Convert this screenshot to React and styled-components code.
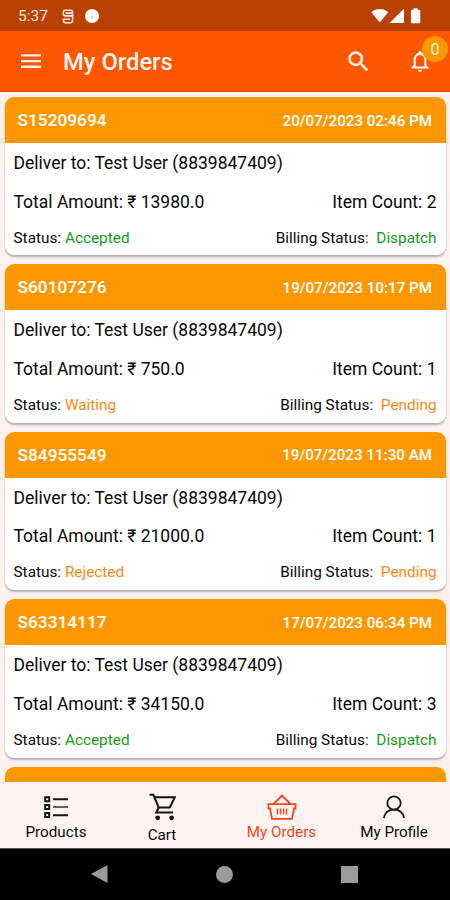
import React, { Component } from "react";
import styled, { createGlobalStyle } from "styled-components";

const orders = [
  { id: "S15209694", date: "20/07/2023 02:46 PM", amount: "13980.0", count: 2, status: "Accepted", billing: "Dispatch" },
  { id: "S60107276", date: "19/07/2023 10:17 PM", amount: "750.0", count: 1, status: "Waiting", billing: "Pending" },
  { id: "S84955549", date: "19/07/2023 11:30 AM", amount: "21000.0", count: 1, status: "Rejected", billing: "Pending" },
  { id: "S63314117", date: "17/07/2023 06:34 PM", amount: "34150.0", count: 3, status: "Accepted", billing: "Dispatch" },
];

const statusColors = {
  Accepted: "#169b20",
  Dispatch: "#169b20",
  Waiting: "#fb8714",
  Pending: "#fb8714",
  Rejected: "#fb8714",
};

const StatusBar = () => (
  <StatusWrapper>
    <Clock>5:37</Clock>
    <svg width="12" height="15" viewBox="0 0 12 15" fill="none" stroke="#ffe6dc" strokeWidth="1.6">
      <path d="M10.500 3.600V2.600Q10.500 1.200 8.500 1.200H3.500Q1.400 1.200 1.400 3.200V5Q1.400 6.900 3.500 6.900H10.600V11.500Q10.600 13.700 8.300 13.700H3.700Q1.400 13.700 1.400 11.500V10.300H8" />
      <path d="M3.500 4.100H10.500V7" />
    </svg>
    <InfoDot>
      <svg width="14" height="14" viewBox="0 0 14 14">
        <circle cx="7" cy="7" r="7" fill="#fff" />
        <path d="M7 4.200V5.300M7 6.400V9.800" stroke="#e5c3b4" strokeWidth="1.700" />
      </svg>
    </InfoDot>
    <Signals>
      <svg width="50" height="16" viewBox="0 0 50 16" fill="#fff">
        <path d="M0.300 4.200C5 0 12.500 0 17.200 4.200L8.700 14.500Z" />
        <path d="M33 0.800V15H18.500Z" />
        <path d="M42.500 0.300H46.500V1.800H48.300Q49.300 1.800 49.300 2.800V14Q49.300 15.300 48.300 15.300H41Q39.900 15.300 39.900 14V2.800Q39.900 1.800 41 1.800H42.500Z" />
      </svg>
    </Signals>
  </StatusWrapper>
);

const Navbar = () => (
  <NavWrapper>
    <svg width="20" height="16" viewBox="0 0 20 16" fill="#fff0e8">
      <path d="M0 1.200H20V3.500H0ZM0 6.900H20V9.200H0ZM0 12.600H20V14.900H0Z" />
    </svg>
    <Title>My Orders</Title>
    <SearchButton>
      <svg width="27" height="27" viewBox="0 0 24 24" fill="#fff4ee" stroke="#fff4ee" strokeWidth="0.3">
        <path d="M15.500 14h-.79l-.28-.27A6.471 6.471 0 0 0 16 9.500 6.500 6.500 0 1 0 9.500 16c1.610 0 3.090-.59 4.230-1.570l.27.28v.79l5 4.990L20.490 19l-4.990-5zm-6 0C7.010 14 5 11.990 5 9.500S7.010 5 9.500 5 14 7.010 14 9.500 11.990 14 9.500 14z" />
      </svg>
    </SearchButton>
    <BellButton>
      <svg width="26" height="26" viewBox="0 0 24 24" fill="#fff4ee">
        <path d="M12 22c1.100 0 2-.9 2-2h-4c0 1.100.9 2 2 2zm6-6v-5c0-3.070-1.630-5.640-4.500-6.320V4c0-.83-.67-1.500-1.500-1.500s-1.500.67-1.500 1.500v.68C7.640 5.360 6 7.920 6 11v5l-2 2v1h16v-1l-2-2zm-2 1H8v-6c0-2.480 1.510-4.500 4-4.500s4 2.020 4 4.500v6z" />
      </svg>
      <TotalItems>0</TotalItems>
    </BellButton>
  </NavWrapper>
);

const OrderCard = ({ order }) => (
  <Card>
    <CardHeader>
      <OrderId>{order.id}</OrderId>
      <OrderDate>{order.date}</OrderDate>
    </CardHeader>
    <Row $height={40}>
      <Info>Deliver to: Test User (8839847409)</Info>
    </Row>
    <Row $height={37}>
      <Info>Total Amount: ₹ {order.amount}</Info>
      <Info>Item Count: {order.count}</Info>
    </Row>
    <Row $height={35.4}>
      <Label>
        Status: <State $color={statusColors[order.status]}>{order.status}</State>
      </Label>
      <Label>
        Billing Status:&nbsp; <State $color={statusColors[order.billing]}>{order.billing}</State>
      </Label>
    </Row>
  </Card>
);

const ProductsIcon = () => (
  <svg width="26" height="26" viewBox="0 0 26 26" fill="none" stroke="#171313">
    <path d="M2.200 3.200H6.200V7.200H2.200ZM2.200 11H6.200V15H2.200ZM2.200 19H6.200V23H2.200Z" strokeWidth="2" />
    <path d="M10 5.200H25M10 21.200H25" strokeWidth="1.900" />
    <path d="M10 13H25" stroke="#5d5858" strokeWidth="1.900" />
  </svg>
);

const CartIcon = () => (
  <svg width="27" height="28" viewBox="0 0 28 28" fill="none" stroke="#171313" strokeWidth="2.100">
    <path d="M0.500 1.200H4.500L10 14.500H21.500L26.800 3.800H6" />
    <path d="M10 14.500L7.500 19.700H25" />
    <circle cx="9" cy="25.200" r="2.500" fill="#171313" stroke="none" />
    <circle cx="23.500" cy="25.200" r="2.500" fill="#171313" stroke="none" />
  </svg>
);

const BasketIcon = () => (
  <svg width="30" height="26" viewBox="0 0 30 26" fill="none" stroke="#f1461c" strokeWidth="1.800">
    <path d="M6.500 10L15 1.500L23.500 10" />
    <path d="M1.500 10.200H28.500V14.500H27L25 24.800H5L3 14.500H1.500Z" />
    <path d="M10.500 14.500V20.500M13.500 14.500V20.500M16.500 14.500V20.500M19.500 14.500V20.500" strokeWidth="1.500" />
  </svg>
);

const ProfileIcon = () => (
  <svg width="24" height="26" viewBox="0 0 24 26" fill="none" stroke="#171313" strokeWidth="1.800">
    <circle cx="12" cy="9" r="6.700" />
    <path d="M1.900 24C3 18.600 7 15.700 12 15.700S21 18.600 22.100 24" />
  </svg>
);

class App extends Component {
  render() {
    return (
      <Screen>
        <GlobalStyle />
        <StatusBar />
        <Navbar />
        <OrderList>
          {orders.map((order) => (
            <OrderCard key={order.id} order={order} />
          ))}
          <NextCard />
        </OrderList>
        <BottomTabs>
          <Tab $width={112}>
            <ProductsIcon />
            Products
          </Tab>
          <Tab $width={100} $low>
            <CartIcon />
            Cart
          </Tab>
          <Tab $width={139} $active>
            <BasketIcon />
            My Orders
          </Tab>
          <Tab $width={86}>
            <ProfileIcon />
            My Profile
          </Tab>
        </BottomTabs>
        <SystemBar>
          <svg width="17" height="18" viewBox="0 0 17 18">
            <path d="M16.500 0V18L0 9Z" fill="#9b9b9b" />
          </svg>
          <Home />
          <Recent />
        </SystemBar>
      </Screen>
    );
  }
}

export default App;

const GlobalStyle = createGlobalStyle`
  * {
    box-sizing: border-box;
  }
  body {
    margin: 0;
    font-family: Roboto, "Liberation Sans", sans-serif;
    overflow: hidden;
  }
  svg {
    display: block;
    flex: none;
  }
`;
const Screen = styled.div`
  display: flex;
  flex-direction: column;
  width: 450px;
  height: 900px;
  background: #fff1f0;
  color: #080808;
`;
const StatusWrapper = styled.div`
  flex: none;
  display: flex;
  align-items: center;
  height: 31px;
  padding: 1px 29px 0 18px;
  background: #ba4100;
`;
const Clock = styled.div`
  width: 44px;
  font-size: 15.5px;
  color: #ffe9e0;
`;
const InfoDot = styled.div`
  margin-left: 11px;
`;
const Signals = styled.div`
  margin-left: auto;
`;
const NavWrapper = styled.div`
  flex: none;
  display: flex;
  align-items: center;
  height: 61px;
  padding: 0 17px 0 21px;
  background: #ff5600;
  border-bottom: 1px solid #f5401c;
`;
const Title = styled.div`
  margin: 1px 0 0 22px;
  font-size: 23.8px;
  font-weight: 500;
  color: #fff4ee;
  white-space: nowrap;
`;
const SearchButton = styled.div`
  margin-left: auto;
`;
const BellButton = styled.div`
  position: relative;
  margin-left: 35px;
`;
const TotalItems = styled.div`
  position: absolute;
  left: 15px;
  top: -12px;
  width: 26px;
  height: 26px;
  border-radius: 50%;
  background: #ff9800;
  color: #fff1d8;
  font-size: 16px;
  line-height: 28px;
  text-align: center;
`;
const OrderList = styled.div`
  flex: 1;
  min-height: 0;
  display: flex;
  flex-direction: column;
  gap: 9px;
  padding: 5px 4px 0 5px;
  overflow: hidden;
`;
const Card = styled.div`
  flex: none;
  background: #fff;
  border-radius: 9px;
  overflow: hidden;
  box-shadow: 0 2px 2px rgba(90, 70, 75, 0.4);
`;
const CardHeader = styled.div`
  display: flex;
  align-items: center;
  justify-content: space-between;
  height: 46px;
  padding: 0 14px 0 12.5px;
  background: #ff9800;
  color: #fffaf2;
`;
const NextCard = styled.div`
  flex: 1;
  background: #ff9800;
  border-radius: 9px 9px 0 0;
`;
const OrderId = styled.div`
  font-size: 17.2px;
  font-weight: 600;
`;
const OrderDate = styled.div`
  margin-top: 1px;
  font-size: 15.1px;
  font-weight: 600;
`;
const Row = styled.div`
  display: flex;
  align-items: center;
  justify-content: space-between;
  height: ${(props) => props.$height}px;
  padding: 0 9.5px 0 8.5px;
`;
const Info = styled.div`
  font-size: 17.5px;
  white-space: pre;
`;
const Label = styled.div`
  font-size: 15.35px;
  white-space: pre;
`;
const State = styled.span`
  color: ${(props) => props.$color};
`;
const BottomTabs = styled.div`
  flex: none;
  display: flex;
  justify-content: space-between;
  height: 66px;
  padding-right: 13px;
  background: #fff4f2;
`;
const Tab = styled.div`
  width: ${(props) => props.$width}px;
  display: flex;
  flex-direction: column;
  align-items: center;
  gap: ${(props) => (props.$low ? 5 : 3)}px;
  padding-top: ${(props) => (props.$low ? 11 : 12)}px;
  font-size: 15.2px;
  line-height: 18px;
  white-space: nowrap;
  color: ${(props) => (props.$active ? "#f1461c" : "#080808")};
`;
const SystemBar = styled.div`
  flex: none;
  display: flex;
  align-items: center;
  justify-content: space-between;
  height: 52px;
  padding: 0 92px 1px 91px;
  background: #000;
  border-top: 1px solid #5c5655;
`;
const Home = styled.div`
  width: 17px;
  height: 17px;
  border-radius: 50%;
  background: #9b9b9b;
`;
const Recent = styled.div`
  width: 17px;
  height: 17px;
  background: #9b9b9b;
`;
